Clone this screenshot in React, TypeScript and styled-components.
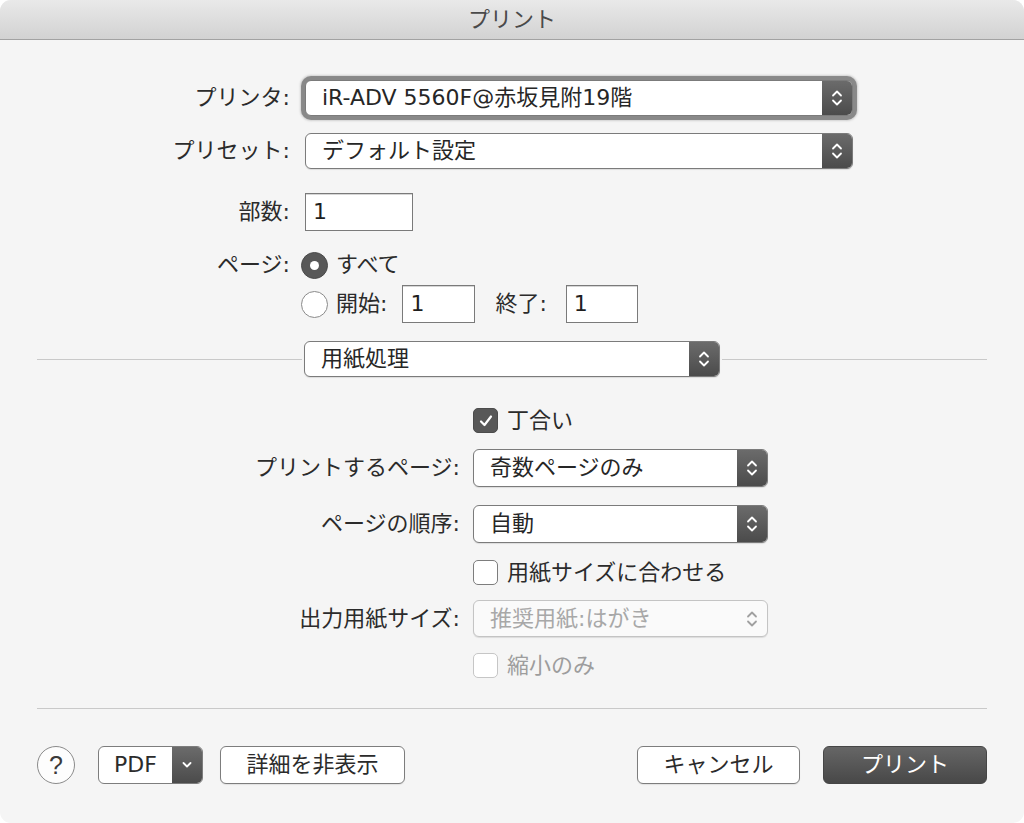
import React from 'react'
import styled, { createGlobalStyle, css } from 'styled-components'

const GlobalStyle = createGlobalStyle`
  html, body { margin: 0; padding: 0; background: #ffffff; }
  body {
    font-family: "DejaVu Sans", "Noto Sans CJK JP", sans-serif;
    font-size: 22px;
    color: #2b2b2b;
  }
`

const Window = styled.div`
  width: 1024px;
  height: 823px;
  background: #f5f5f5;
  border-radius: 11px;
  overflow: hidden;
  display: flex;
  flex-direction: column;
`

const TitleBar = styled.div`
  flex: none;
  height: 39px;
  background: linear-gradient(#e9e9e9, #d2d2d2);
  border-bottom: 1px solid #a2a2a2;
  display: flex;
  align-items: center;
  justify-content: center;
  color: #4a4a4a;
  line-height: 1;
`

const Body = styled.div`
  padding: 0 37px;
  display: flex;
  flex-direction: column;
`

const FormRow = styled.div<{ $label: number; $gap: number; $mt: number; $h: number }>`
  display: grid;
  grid-template-columns: ${p => p.$label}px auto;
  column-gap: ${p => p.$gap}px;
  align-items: center;
  height: ${p => p.$h}px;
  margin-top: ${p => p.$mt}px;
`

const Label = styled.span`
  text-align: right;
  white-space: nowrap;
  line-height: 1;
`

const Inline = styled.div<{ $shift?: number }>`
  display: flex;
  align-items: center;
  margin-left: ${p => p.$shift ?? 0}px;
  line-height: 1;
  white-space: nowrap;
`

const Text = styled.span<{ $ml?: number; $disabled?: boolean }>`
  margin-left: ${p => p.$ml ?? 0}px;
  color: ${p => (p.$disabled ? '#9d9d9d' : 'inherit')};
`

const SelectBox = styled.div<{ $w: number; $h: number; $focus?: boolean; $disabled?: boolean }>`
  width: ${p => p.$w}px;
  height: ${p => p.$h}px;
  box-sizing: border-box;
  display: flex;
  border: 1px solid ${p => (p.$disabled ? '#c4c4c4' : '#7b7b7b')};
  border-radius: 6px;
  background: ${p => (p.$disabled ? '#fafafa' : '#ffffff')};
  overflow: hidden;
  box-shadow: ${p =>
    p.$focus
      ? '0 0 0 4px rgba(125,125,125,0.85), 0 0 2px 5px rgba(125,125,125,0.3)'
      : '0 1px 1px rgba(0,0,0,0.1)'};
`

const SelectText = styled.span<{ $disabled?: boolean }>`
  flex: 1;
  display: flex;
  align-items: center;
  padding-left: 16px;
  white-space: nowrap;
  line-height: 1;
  color: ${p => (p.$disabled ? '#a8a8a8' : '#262626')};
`

const Stepper = styled.span<{ $disabled?: boolean }>`
  flex: none;
  width: 30px;
  display: flex;
  align-items: center;
  justify-content: center;
  ${p =>
    p.$disabled
      ? css`background: transparent;`
      : css`background: linear-gradient(#6b6b6b, #4b4b4b);`}
`

const NumberField = styled.div<{ $w: number }>`
  width: ${p => p.$w}px;
  height: 38px;
  box-sizing: border-box;
  border: 1px solid #7a7a7a;
  background: #ffffff;
  box-shadow: inset 0 1px 0 #d6d6d6;
  display: flex;
  align-items: center;
  padding-left: 7px;
  line-height: 1;
  color: #1e1e1e;
`

const Radio = styled.span<{ $on?: boolean }>`
  flex: none;
  width: 27px;
  height: 27px;
  box-sizing: border-box;
  border-radius: 50%;
  display: flex;
  align-items: center;
  justify-content: center;
  ${p =>
    p.$on
      ? css`
          background: #585858;
          border: 1px solid #4a4a4a;
          &::after {
            content: '';
            width: 9px;
            height: 9px;
            border-radius: 50%;
            background: #ffffff;
          }
        `
      : css`
          background: #ffffff;
          border: 1px solid #8a8a8a;
        `}
`

const Checkbox = styled.span<{ $on?: boolean; $disabled?: boolean }>`
  flex: none;
  width: 25px;
  height: 25px;
  box-sizing: border-box;
  border-radius: 5px;
  display: flex;
  align-items: center;
  justify-content: center;
  background: ${p => (p.$on ? '#585858' : '#ffffff')};
  border: 1px solid ${p => (p.$on ? '#4c4c4c' : p.$disabled ? '#c6c6c6' : '#7d7d7d')};
`

const SectionRow = styled.div`
  display: flex;
  align-items: center;
  gap: 2px;
  height: 36px;
  margin-top: 18px;
`

const SectionLine = styled.div`
  flex: 1;
  height: 1px;
  background: #c9c9c9;
`

const Divider = styled.div`
  flex: none;
  height: 1px;
  background: #c9c9c9;
  margin-top: 30px;
`

const Footer = styled.div`
  display: flex;
  align-items: center;
  height: 38px;
  margin-top: 37px;
`

const HelpButton = styled.div`
  width: 38px;
  height: 38px;
  box-sizing: border-box;
  border-radius: 50%;
  border: 1px solid #8a8a8a;
  background: #fdfdfd;
  display: flex;
  align-items: center;
  justify-content: center;
  font-family: "Liberation Sans", sans-serif;
  font-size: 25px;
  color: #3a3a3a;
  line-height: 1;
`

const Button = styled.div<{ $w: number; $primary?: boolean; $ml?: number }>`
  width: ${p => p.$w}px;
  height: 38px;
  box-sizing: border-box;
  margin-left: ${p => p.$ml ?? 0}px;
  border-radius: 6px;
  display: flex;
  align-items: center;
  justify-content: center;
  line-height: 1;
  ${p =>
    p.$primary
      ? css`
          background: linear-gradient(#666666, #484848);
          border: 1px solid #464646;
          color: #ffffff;
        `
      : css`
          background: #ffffff;
          border: 1px solid #7d7d7d;
          color: #2b2b2b;
          box-shadow: 0 1px 1px rgba(0, 0, 0, 0.08);
        `}
`

const MenuButton = styled.div`
  width: 105px;
  height: 38px;
  box-sizing: border-box;
  margin-left: 23px;
  border: 1px solid #7d7d7d;
  border-radius: 6px;
  overflow: hidden;
  display: flex;
  background: #ffffff;
`

const MenuLabel = styled.span`
  flex: 1;
  display: flex;
  align-items: center;
  justify-content: center;
  line-height: 1;
`

const MenuArrow = styled.span`
  flex: none;
  width: 30px;
  display: flex;
  align-items: center;
  justify-content: center;
  background: linear-gradient(#6b6b6b, #4b4b4b);
`

const Spacer = styled.div`
  flex: 1;
`

const Chevrons = ({ color = '#ffffff' }: { color?: string }) => (
  <svg width="12" height="20" viewBox="0 0 12 20">
    <path d="M2 7.5 L6 3.5 L10 7.5" fill="none" stroke={color} strokeWidth="1.8" strokeLinecap="round" strokeLinejoin="round" />
    <path d="M2 12.5 L6 16.5 L10 12.5" fill="none" stroke={color} strokeWidth="1.8" strokeLinecap="round" strokeLinejoin="round" />
  </svg>
)

const Check = () => (
  <svg width="16" height="16" viewBox="0 0 16 16">
    <path d="M3 8.5 L6.5 12 L13 3.5" fill="none" stroke="#ffffff" strokeWidth="2.2" strokeLinecap="round" strokeLinejoin="round" />
  </svg>
)

type SelectProps = { w: number; h: number; value: string; focus?: boolean; disabled?: boolean }

const Select = ({ w, h, value, focus, disabled }: SelectProps) => (
  <SelectBox $w={w} $h={h} $focus={focus} $disabled={disabled}>
    <SelectText $disabled={disabled}>{value}</SelectText>
    <Stepper $disabled={disabled}>
      <Chevrons color={disabled ? '#a0a0a0' : '#ffffff'} />
    </Stepper>
  </SelectBox>
)

const TOP = { $label: 253, $gap: 15 }
const LOW = { $label: 423, $gap: 13 }

export default function App() {
  return (
    <>
      <GlobalStyle />
      <Window>
        <TitleBar>プリント</TitleBar>
        <Body>
          <FormRow {...TOP} $mt={40} $h={36}>
            <Label>プリンタ:</Label>
            <Select w={548} h={36} value="iR-ADV 5560F@赤坂見附19階" focus />
          </FormRow>
          <FormRow {...TOP} $mt={17} $h={36}>
            <Label>プリセット:</Label>
            <Select w={548} h={36} value="デフォルト設定" />
          </FormRow>
          <FormRow {...TOP} $mt={24} $h={38}>
            <Label>部数:</Label>
            <NumberField $w={108}>1</NumberField>
          </FormRow>
          <FormRow {...TOP} $mt={20} $h={28}>
            <Label>ページ:</Label>
            <Inline $shift={-4}>
              <Radio $on />
              <Text $ml={8}>すべて</Text>
            </Inline>
          </FormRow>
          <FormRow {...TOP} $mt={6} $h={38}>
            <span />
            <Inline $shift={-4}>
              <Radio />
              <Text $ml={8}>開始:</Text>
              <Text $ml={15}>
                <NumberField $w={73}>1</NumberField>
              </Text>
              <Text $ml={20}>終了:</Text>
              <Text $ml={19}>
                <NumberField $w={72}>1</NumberField>
              </Text>
            </Inline>
          </FormRow>
          <SectionRow>
            <SectionLine />
            <Select w={416} h={36} value="用紙処理" />
            <SectionLine />
          </SectionRow>
          <FormRow {...LOW} $mt={31} $h={25}>
            <span />
            <Inline>
              <Checkbox $on>
                <Check />
              </Checkbox>
              <Text $ml={9}>丁合い</Text>
            </Inline>
          </FormRow>
          <FormRow {...LOW} $mt={16} $h={38}>
            <Label>プリントするページ:</Label>
            <Select w={295} h={38} value="奇数ページのみ" />
          </FormRow>
          <FormRow {...LOW} $mt={18} $h={38}>
            <Label>ページの順序:</Label>
            <Select w={295} h={38} value="自動" />
          </FormRow>
          <FormRow {...LOW} $mt={17} $h={25}>
            <span />
            <Inline>
              <Checkbox />
              <Text $ml={9}>用紙サイズに合わせる</Text>
            </Inline>
          </FormRow>
          <FormRow {...LOW} $mt={15} $h={37}>
            <Label>出力用紙サイズ:</Label>
            <Select w={295} h={37} value="推奨用紙:はがき" disabled />
          </FormRow>
          <FormRow {...LOW} $mt={16} $h={25}>
            <span />
            <Inline>
              <Checkbox $disabled />
              <Text $ml={9} $disabled>縮小のみ</Text>
            </Inline>
          </FormRow>
          <Divider />
          <Footer>
            <HelpButton>?</HelpButton>
            <MenuButton>
              <MenuLabel>PDF</MenuLabel>
              <MenuArrow>
                <svg width="12" height="8" viewBox="0 0 12 8">
                  <path d="M2.5 2 L6 5.5 L9.5 2" fill="none" stroke="#ffffff" strokeWidth="1.8" strokeLinecap="round" strokeLinejoin="round" />
                </svg>
              </MenuArrow>
            </MenuButton>
            <Button $w={185} $ml={17}>詳細を非表示</Button>
            <Spacer />
            <Button $w={163}>キャンセル</Button>
            <Button $w={164} $ml={23} $primary>プリント</Button>
          </Footer>
        </Body>
      </Window>
    </>
  )
}
